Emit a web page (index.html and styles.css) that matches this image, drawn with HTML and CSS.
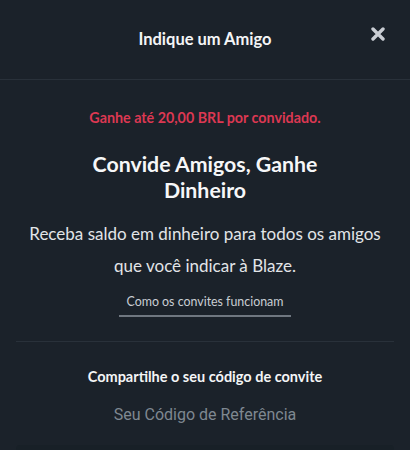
FILE: index.html
```html
<!DOCTYPE html>
<html lang="pt-BR">
<head>
<meta charset="utf-8">
<title>Indique um Amigo</title>
<link rel="stylesheet" href="styles.css">
</head>
<body>
<div class="modal">
  <header class="modal-header">
    <h1 class="modal-title">Indique um Amigo</h1>
    <button class="close-btn" aria-label="Fechar">
      <svg width="14" height="14" viewBox="0 0 14 14"><path d="M2 2 L12 12 M12 2 L2 12" stroke="#c9cdd3" stroke-width="3.4" stroke-linecap="round"/></svg>
    </button>
  </header>
  <div class="modal-body">
    <section class="intro">
      <p class="promo">Ganhe até 20,00 BRL por convidado.</p>
      <h2 class="headline">Convide Amigos, Ganhe<br>Dinheiro</h2>
      <p class="desc">Receba saldo em dinheiro para todos os amigos que você indicar à Blaze.</p>
      <a class="how-link" href="#">Como os convites funcionam</a>
    </section>
    <section class="share">
      <h3 class="share-title">Compartilhe o seu código de convite</h3>
      <div class="code-field">Seu Código de Referência</div>
      <div class="code-box"></div>
    </section>
  </div>
</div>
</body>
</html>
```
FILE: styles.css
```css
* { box-sizing: border-box; }
html, body {
  margin: 0;
  background: #1b222a;
}
body {
  font-family: Lato, "Open Sans", sans-serif;
  color: #ffffff;
}
.modal {
  width: 410px;
  height: 450px;
  overflow: hidden;
  position: relative;
}
.modal-header {
  height: 80px;
  display: flex;
  align-items: center;
  justify-content: center;
  border-bottom: 1px solid #29313a;
  position: relative;
}
.modal-title {
  margin: 0;
  font-size: 16.5px;
  font-weight: 700;
  color: #f4f5f6;
  padding-bottom: 2px;
}
.close-btn {
  position: absolute;
  right: 25px;
  top: 27px;
  background: none;
  border: 0;
  padding: 0;
  width: 14px;
  height: 14px;
  display: flex;
  cursor: pointer;
}
.modal-body {
  padding: 0 16px;
}
.intro {
  display: flex;
  flex-direction: column;
  align-items: center;
  text-align: center;
  padding-top: 29px;
  padding-bottom: 24px;
  border-bottom: 1px solid #29313a;
}
.promo {
  margin: 0;
  font-size: 14.3px;
  font-weight: 700;
  color: #dc3852;
  line-height: 18px;
}
.headline {
  margin: 24px 0 0;
  font-size: 21.3px;
  font-weight: 700;
  line-height: 26px;
  color: #f6f7f8;
}
.desc {
  margin: 15px 0 0;
  font-size: 17px;
  font-weight: 400;
  line-height: 32px;
  color: #e2e5e8;
  padding: 0;
}
.how-link {
  margin-top: 12px;
  font-size: 12.4px;
  color: #c9ced4;
  text-decoration: none;
  padding: 0 8px 5px;
  border-bottom: 2px solid #6f7780;
  line-height: 16px;
}
.share {
  display: flex;
  flex-direction: column;
  align-items: center;
  padding-top: 26px;
}
.share-title {
  margin: 0;
  font-size: 14.5px;
  font-weight: 700;
  color: #f4f5f6;
  line-height: 18px;
}
.code-field {
  margin-top: 19px;
  font-family: Roboto, sans-serif;
  font-size: 16px;
  color: #7f8891;
  line-height: 20px;
}
.code-box {
  align-self: stretch;
  margin-top: 20px;
  height: 40px;
  background: #182027;
  border-radius: 4px;
}
```
